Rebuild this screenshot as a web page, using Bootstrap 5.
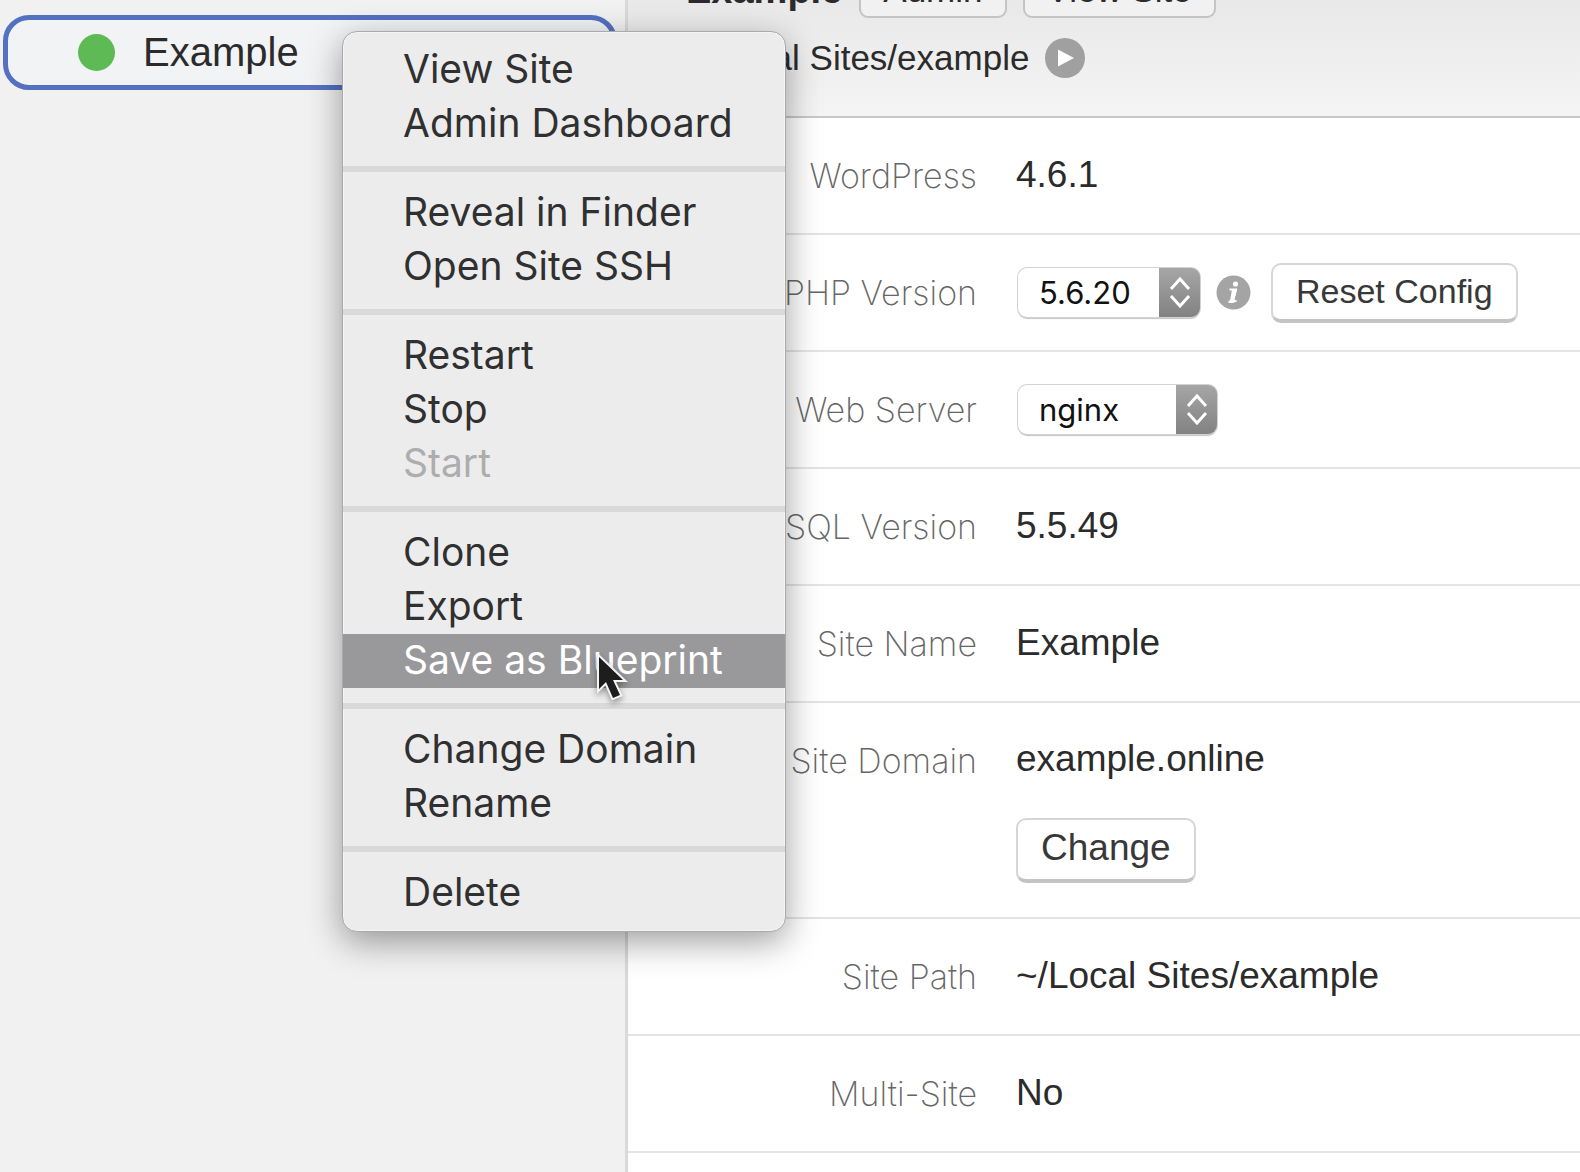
<!DOCTYPE html>
<html lang="en">
<head>
<meta charset="utf-8">
<meta name="viewport" content="width=device-width, initial-scale=1">
<title>Local Sites</title>
<link href="https://cdn.jsdelivr.net/npm/bootstrap@5.3.0/dist/css/bootstrap.min.css" rel="stylesheet">
<style>
  body { font-family: "Liberation Sans", Arial, sans-serif; color: #2b2b2b; background: #fff; font-size: 37px; line-height: 48px; }
  .sidebar { flex: 0 0 628px; background: #f1f1f1; border-right: 3px solid #d9d9d9; padding: 15px 8px 0 3px; }
  .site-link { border: 5px solid #5470c0; border-radius: 26px; padding: 8px 70px; gap: 28px; font-size: 40px; line-height: 49px; height: 75px; color: #2b2b2b; background: #f2f3f5; }
  .site-status { width: 37px; height: 37px; background: #5dba55; }
  .site-head { margin-top: -43px; padding: 0 58px 34px; background: linear-gradient(#e9e9e9 30%, #f4f4f4); border-bottom: 2px solid #c8c8c8; }
  .site-title { font-size: 38px; line-height: 48px; margin-right: 17px; }
  .head-btn { font-size: 35px; line-height: 48px; height: 61px; padding: 7px 22px 2px; border: 2px solid #c4c4c4; border-radius: 9px; background: #f1f1f1; color: #2b2b2b; }
  .site-path { font-size: 35px; line-height: 48px; gap: 16px; margin-top: 16px; }
  .round-btn { width: 40px; height: 40px; }
  .setting { border-bottom: 2px solid #e4e4e4; gap: 39px; min-height: 117px; }
  .setting-name { flex: 0 0 349px; padding-top: 34px; font-family: Inter, sans-serif; font-weight: 200; font-size: 34px; color: #666; }
  .setting-value { padding-bottom: 2px; }
  .domain-value { padding: 32px 0 34px; gap: 35px; }
  .mac-btn { background: #fff; border: 2px solid #d6d6d6; border-bottom: 4px solid #c4c4c4; border-radius: 10px; color: #383838; line-height: 48px; }
  .mac-btn-sm { font-size: 34px; height: 60px; padding: 2px 23px 4px; }
  .mac-btn-lg { font-size: 37px; height: 65px; padding: 4px 23px 7px; }
  .mac-select { height: 49px; margin-left: 2px; padding: 0 41px 0 21px; border: 0; border-radius: 9px; box-shadow: 0 0 0 1px #d2d2d2, 0 2px 1px #c4c4c4; font-family: Inter, sans-serif; font-size: 31px; line-height: 48px; color: #111;
    background: url("data:image/svg+xml,%3Csvg xmlns='http://www.w3.org/2000/svg' viewBox='0 0 41 49'%3E%3Cpath d='M12 21l9-10 9 10M12 28l9 10 9-10' fill='none' stroke='white' stroke-width='3'/%3E%3C/svg%3E") right center / 41px 49px no-repeat, linear-gradient(#a6a6a6, #828282) right center / 41px 100% no-repeat, #fff; }
  .select-php { width: 182px; }
  .select-server { width: 199px; }
  .info-btn { width: 35px; height: 35px; margin: 0 20px 0 16px; }
  .context-menu { display: block; left: 342px; top: 31px; width: 444px; padding: 11px 0; border: 1px solid #a9a9ae; border-radius: 15px; background: #ececed; box-shadow: inset 0 0 0 1px #f4f4f4, 0 10px 34px rgba(0,0,0,.38); font-family: Inter, sans-serif; font-size: 39px; }
  .context-menu .dropdown-item { padding: 0 60px 2px; color: #303030; line-height: 52px; }
  .context-menu .dropdown-item.active { background: #99999b; color: #fff; }
  .context-menu .dropdown-item.disabled { color: #adadae; }
  .context-menu .dropdown-divider { margin: 15px 0 14px; border-top: 6px solid #d9d9d9; opacity: 1; }
  .pointer { left: 592px; top: 650px; width: 44px; height: 58px; z-index: 1100; filter: drop-shadow(0 3px 3px rgba(0,0,0,.4)); }
</style>
<script src="https://cdn.jsdelivr.net/npm/bootstrap@5.3.0/dist/js/bootstrap.bundle.min.js"></script>
</head>
<body class="vh-100 overflow-hidden">
<div class="d-flex vh-100 position-relative">
  <aside class="sidebar">
    <a href="#" class="site-link d-flex align-items-center text-decoration-none">
      <span class="site-status rounded-circle"></span>Example
    </a>
  </aside>

  <main class="flex-grow-1">
    <header class="site-head">
      <div class="d-flex align-items-end">
        <h1 class="site-title fw-bold mb-1">Example</h1>
        <button type="button" class="btn head-btn me-3">Admin</button>
        <button type="button" class="btn head-btn">View Site</button>
      </div>
      <div class="site-path d-flex align-items-center">
        <span>~/Local Sites/example</span>
        <button type="button" class="btn p-0 border-0 round-btn d-flex" aria-label="Open folder">
          <svg viewBox="0 0 40 40" width="40" height="40"><circle cx="20" cy="20" r="20" fill="#a0a0a0"/><path d="M13 11.500L29 20 13 28.500z" fill="#fff"/></svg>
        </button>
      </div>
    </header>

    <section>
      <div class="setting d-flex">
        <div class="setting-name text-end">WordPress</div>
        <div class="setting-value d-flex align-items-center">4.6.1</div>
      </div>
      <div class="setting d-flex">
        <label class="setting-name text-end text-nowrap" for="php">PHP Version</label>
        <div class="d-flex align-items-center">
          <select id="php" class="form-select mac-select select-php"><option>5.6.20</option></select>
          <button type="button" class="btn p-0 border-0 info-btn d-flex" aria-label="About PHP versions">
            <svg viewBox="0 0 35 35" width="35" height="35"><circle cx="17.500" cy="17.500" r="17" fill="#a4a4a4"/><circle cx="19.500" cy="9" r="2.600" fill="#fff"/><path d="M13.500 14.500h6.500l-3 11.500h3.500M12.500 26.500c2 .6 5 .6 7-.6" fill="none" stroke="#fff" stroke-width="2"/><path d="M16 14.500h5l-3.200 12.500h-4z" fill="#fff"/></svg>
          </button>
          <button type="button" class="btn mac-btn mac-btn-sm">Reset Config</button>
        </div>
      </div>
      <div class="setting d-flex">
        <label class="setting-name text-end" for="server">Web Server</label>
        <div class="d-flex align-items-center">
          <select id="server" class="form-select mac-select select-server"><option>nginx</option></select>
        </div>
      </div>
      <div class="setting d-flex">
        <div class="setting-name text-end">MySQL Version</div>
        <div class="setting-value d-flex align-items-center">5.5.49</div>
      </div>
      <div class="setting d-flex">
        <div class="setting-name text-end">Site Name</div>
        <div class="setting-value d-flex align-items-center">Example</div>
      </div>
      <div class="setting d-flex">
        <div class="setting-name text-end">Site Domain</div>
        <div class="domain-value d-flex flex-column align-items-start">
          <span>example.online</span>
          <button type="button" class="btn mac-btn mac-btn-lg">Change</button>
        </div>
      </div>
      <div class="setting d-flex">
        <div class="setting-name text-end">Site Path</div>
        <div class="setting-value d-flex align-items-center">~/Local Sites/example</div>
      </div>
      <div class="setting d-flex">
        <div class="setting-name text-end">Multi-Site</div>
        <div class="setting-value d-flex align-items-center">No</div>
      </div>
    </section>
  </main>

  <div class="dropdown-menu context-menu position-absolute">
    <button type="button" class="dropdown-item">View Site</button>
    <button type="button" class="dropdown-item">Admin Dashboard</button>
    <hr class="dropdown-divider">
    <button type="button" class="dropdown-item">Reveal in Finder</button>
    <button type="button" class="dropdown-item">Open Site SSH</button>
    <hr class="dropdown-divider">
    <button type="button" class="dropdown-item">Restart</button>
    <button type="button" class="dropdown-item">Stop</button>
    <button type="button" class="dropdown-item disabled" disabled>Start</button>
    <hr class="dropdown-divider">
    <button type="button" class="dropdown-item">Clone</button>
    <button type="button" class="dropdown-item">Export</button>
    <button type="button" class="dropdown-item active">Save as Blueprint</button>
    <hr class="dropdown-divider">
    <button type="button" class="dropdown-item">Change Domain</button>
    <button type="button" class="dropdown-item">Rename</button>
    <hr class="dropdown-divider">
    <button type="button" class="dropdown-item">Delete</button>
  </div>

  <svg class="pointer position-absolute pe-none" viewBox="0 0 44 58" aria-hidden="true">
    <path d="M7 7v32l7-7 7 16 7-3-7-15h10z" fill="#1d1d1d" stroke="#f4f4f4" stroke-width="4" stroke-linejoin="miter" paint-order="stroke"/>
  </svg>
</div>
</body>
</html>
